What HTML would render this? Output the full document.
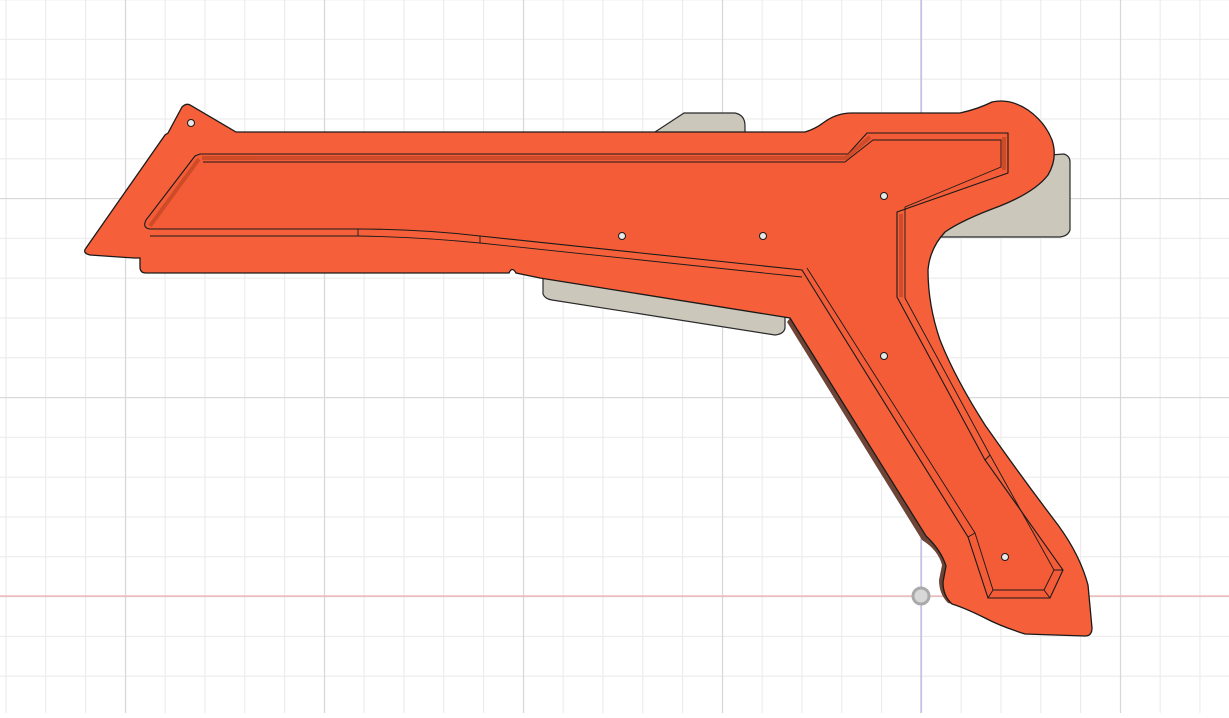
<!DOCTYPE html>
<html><head><style>html,body{margin:0;padding:0;background:#fff;overflow:hidden}</style></head>
<body>
<svg width="1229" height="713" viewBox="0 0 1229 713" xmlns="http://www.w3.org/2000/svg">
<defs>
<pattern id="g" x="5.4" y="38.8" width="39.8" height="39.8" patternUnits="userSpaceOnUse">
<path d="M0.5 0V39.8M0 0.5H39.8" stroke="#ebebeb" stroke-width="1.2" fill="none"/>
</pattern>
<pattern id="G" x="125" y="198" width="199" height="199" patternUnits="userSpaceOnUse">
<path d="M0.5 0V199M0 0.5H199" stroke="#d8d8d8" stroke-width="1.3" fill="none"/>
</pattern>
</defs>
<rect width="1229" height="713" fill="url(#g)"/>
<rect width="1229" height="713" fill="url(#G)"/>
<line x1="921" y1="0" x2="921" y2="713" stroke="#b8b8e8" stroke-width="1.2"/>
<line x1="0" y1="596" x2="1229" y2="596" stroke="#f0b0b0" stroke-width="1.2"/>

<g fill="#ccc7bb" stroke="#2a2a2a" stroke-width="1.2">
<path d="M655 132 L684 113 L735 113 Q745 115 745 126 L745 134 Z"/>
<path d="M1050 155 L1064 154 Q1070 156 1070 162 L1070 230 Q1068 236 1060 237 L940 237 L935 230 Z"/>
<path d="M543 275 L543 294 Q545 299 552 300 L775 335 Q784 334 785 328 L785 315 Z"/>
</g>
<!-- thin extrusion edge -->
<path d="M790 318 L926 536 Q942 546 946 565 L943 582 Q944 596 952 604 L948 603 Q939 594 939 580 L942 565 Q938 550 922 540 L787 322 Z" fill="#6e4436"/>

<path fill="#f5603a" stroke="#1a1a1a" stroke-width="1.3" d="
M86 248 L165 135 L168 133 L182 107 Q186 103 190 105 L236 132 L805 132 Q815 129 823 123 Q836 113 852 113 L960 113 Q978 109 992 102 Q1010 98 1028 110 Q1045 122 1052 140 Q1058 158 1048 175 Q1035 192 1000 206 Q962 220 945 232 Q930 248 928 270 Q928 305 940 340 Q955 378 985 425 Q1020 475 1058 525 Q1080 555 1088 585 L1092 628 Q1092 636 1085 636 L1025 634 Q1000 626 985 618 Q965 608 952 604 Q943 596 943 582 L946 566 Q941 550 926 536 L790 318 L540 278 L516 273 Q512 266 509 273 L146 273 Q140 273 140 267 L140 258 L134 258 L90 255 Q82 253 86 248 Z"/>

<path fill="#f35c37" stroke="#1a1a1a" stroke-width="1.1" d="
M200 154 L848 154 L867 133 L1008 133 L1008 173 L897 212 L897 297 L985 460 L1063 570 L1050 598 L988 598 L968 537 L802 270 L480 236 Q420 229 358 229 L150 229 Q142 228 146 220 L195 156 Z"/>
<g fill="none" stroke="#1a1a1a" stroke-width="0.9">
<path d="M203 162 L845 162 L873 140 L1001 140 L1001 167 L905 207 L905 298 L990 455 L1054 570 L1044 590 L993 590 L975 533 L807 268"/>
<path d="M150 236 L358 236 Q420 237 480 243 L802 277"/>
<path d="M358 229 L358 236 M480 236 L480 243 M985 460 L990 455 M1063 570 L1054 570 M1050 598 L1044 590 M988 598 L993 590 M968 537 L975 533"/>
</g>
<g stroke="#b8401f" stroke-width="4" fill="none" opacity=".6">
<path d="M202 158 L846 158 L870 137"/>
<path d="M1004 137 L1004 170"/>
<path d="M150 226 L199 159"/>
<path d="M901 214 L901 297"/>
</g>

<g fill="#e8e8e8" stroke="#1a1a1a" stroke-width="1">
<circle cx="191" cy="123" r="3.5"/>
<circle cx="622" cy="236" r="3.5"/>
<circle cx="763" cy="236" r="3.5"/>
<circle cx="884" cy="196" r="3.5"/>
<circle cx="884" cy="356" r="3.5"/>
<circle cx="1005" cy="557" r="3.5"/>
</g>
<circle cx="921" cy="596" r="8" fill="#d8d8d8" stroke="#aaa" stroke-width="3"/>
</svg>
</body></html>
